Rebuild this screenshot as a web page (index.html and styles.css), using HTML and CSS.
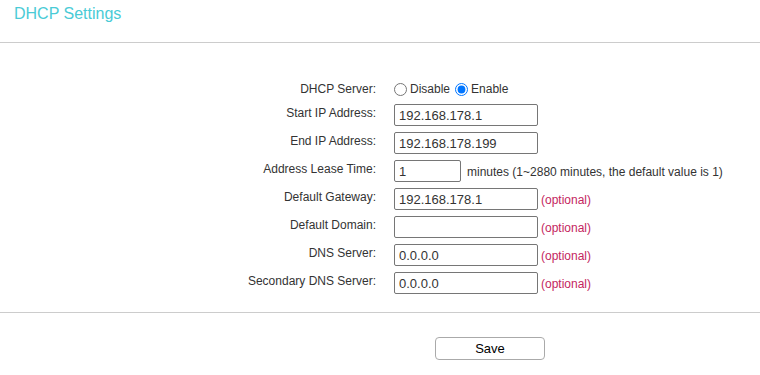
FILE: index.html
```html
<!DOCTYPE html>
<html lang="en">
<head>
    <meta charset="UTF-8">
    <meta name="viewport" content="width=device-width, initial-scale=1.0">
    <title>DHCP Settings</title>
    <link rel="stylesheet" href="styles.css">
</head>
<body>
    <div class="title-bar">
        <h1 class="title">DHCP Settings</h1>
    </div>

    <div class="form">
        <div class="row row-radio">
            <div class="lbl">DHCP Server:</div>
            <div class="ctl">
                <label class="radio"><input type="radio" name="dhcp"> Disable</label>
                <label class="radio"><input type="radio" name="dhcp" checked> Enable</label>
            </div>
        </div>
        <div class="row">
            <div class="lbl">Start IP Address:</div>
            <div class="ctl"><input type="text" class="field" value="192.168.178.1"></div>
        </div>
        <div class="row">
            <div class="lbl">End IP Address:</div>
            <div class="ctl"><input type="text" class="field" value="192.168.178.199"></div>
        </div>
        <div class="row">
            <div class="lbl">Address Lease Time:</div>
            <div class="ctl">
                <input type="text" class="field field-short" value="1">
                <span class="hint">minutes (1~2880 minutes, the default value is 1)</span>
            </div>
        </div>
        <div class="row">
            <div class="lbl">Default Gateway:</div>
            <div class="ctl">
                <input type="text" class="field" value="192.168.178.1">
                <span class="optional">(optional)</span>
            </div>
        </div>
        <div class="row">
            <div class="lbl">Default Domain:</div>
            <div class="ctl">
                <input type="text" class="field" value="">
                <span class="optional">(optional)</span>
            </div>
        </div>
        <div class="row">
            <div class="lbl">DNS Server:</div>
            <div class="ctl">
                <input type="text" class="field" value="0.0.0.0">
                <span class="optional">(optional)</span>
            </div>
        </div>
        <div class="row">
            <div class="lbl">Secondary DNS Server:</div>
            <div class="ctl">
                <input type="text" class="field" value="0.0.0.0">
                <span class="optional">(optional)</span>
            </div>
        </div>
    </div>

    <div class="footer">
        <button class="save-btn">Save</button>
    </div>
</body>
</html>
```

FILE: styles.css
```css
body {
    margin: 0;
    font-family: "Liberation Sans", Arial, sans-serif;
    font-size: 12px;
    color: #333;
    background: #fff;
}

.title-bar {
    height: 42px;
    border-bottom: 1px solid #ccc;
    box-sizing: content-box;
}

.title {
    margin: 0;
    padding: 5px 0 0 14px;
    font-size: 16px;
    font-weight: normal;
    line-height: 18px;
    color: #4acbd6;
}

.form {
    padding: 33px 0 12px;
    border-bottom: 1px solid #ccc;
}

.row {
    display: flex;
    height: 28px;
}

.lbl {
    width: 376px;
    text-align: right;
    line-height: 14px;
    padding-top: 2px;
    box-sizing: border-box;
    color: #333;
}

.ctl {
    display: flex;
    align-items: flex-start;
    padding-left: 18px;
}

.row-radio .lbl {
    padding-top: 6px;
}

.row-radio .ctl {
    padding-top: 6px;
}

.radio {
    display: flex;
    align-items: center;
    line-height: 14px;
    margin-right: 5px;
    color: #333;
}

.radio input {
    margin: 0 3px 0 0;
    width: 13px;
    height: 13px;
}

.field {
    width: 144px;
    height: 22px;
    box-sizing: border-box;
    margin: 0;
    padding: 0 4px;
    border: 1px solid #767676;
    border-radius: 2px;
    font-family: "Liberation Sans", Arial, sans-serif;
    font-size: 13px;
    color: #333;
}

.field-short {
    width: 67px;
}

.hint {
    margin-left: 6px;
    padding-top: 5px;
    line-height: 14px;
    color: #333;
}

.optional {
    margin-left: 3px;
    padding-top: 5px;
    line-height: 14px;
    color: #c4255f;
}

.footer {
    padding-top: 24px;
    padding-left: 435px;
}

.save-btn {
    width: 110px;
    height: 23px;
    background: #fff;
    border: 1px solid #aaa;
    border-radius: 4px;
    font-family: "Liberation Sans", Arial, sans-serif;
    font-size: 13px;
    color: #000;
    cursor: pointer;
}
```
